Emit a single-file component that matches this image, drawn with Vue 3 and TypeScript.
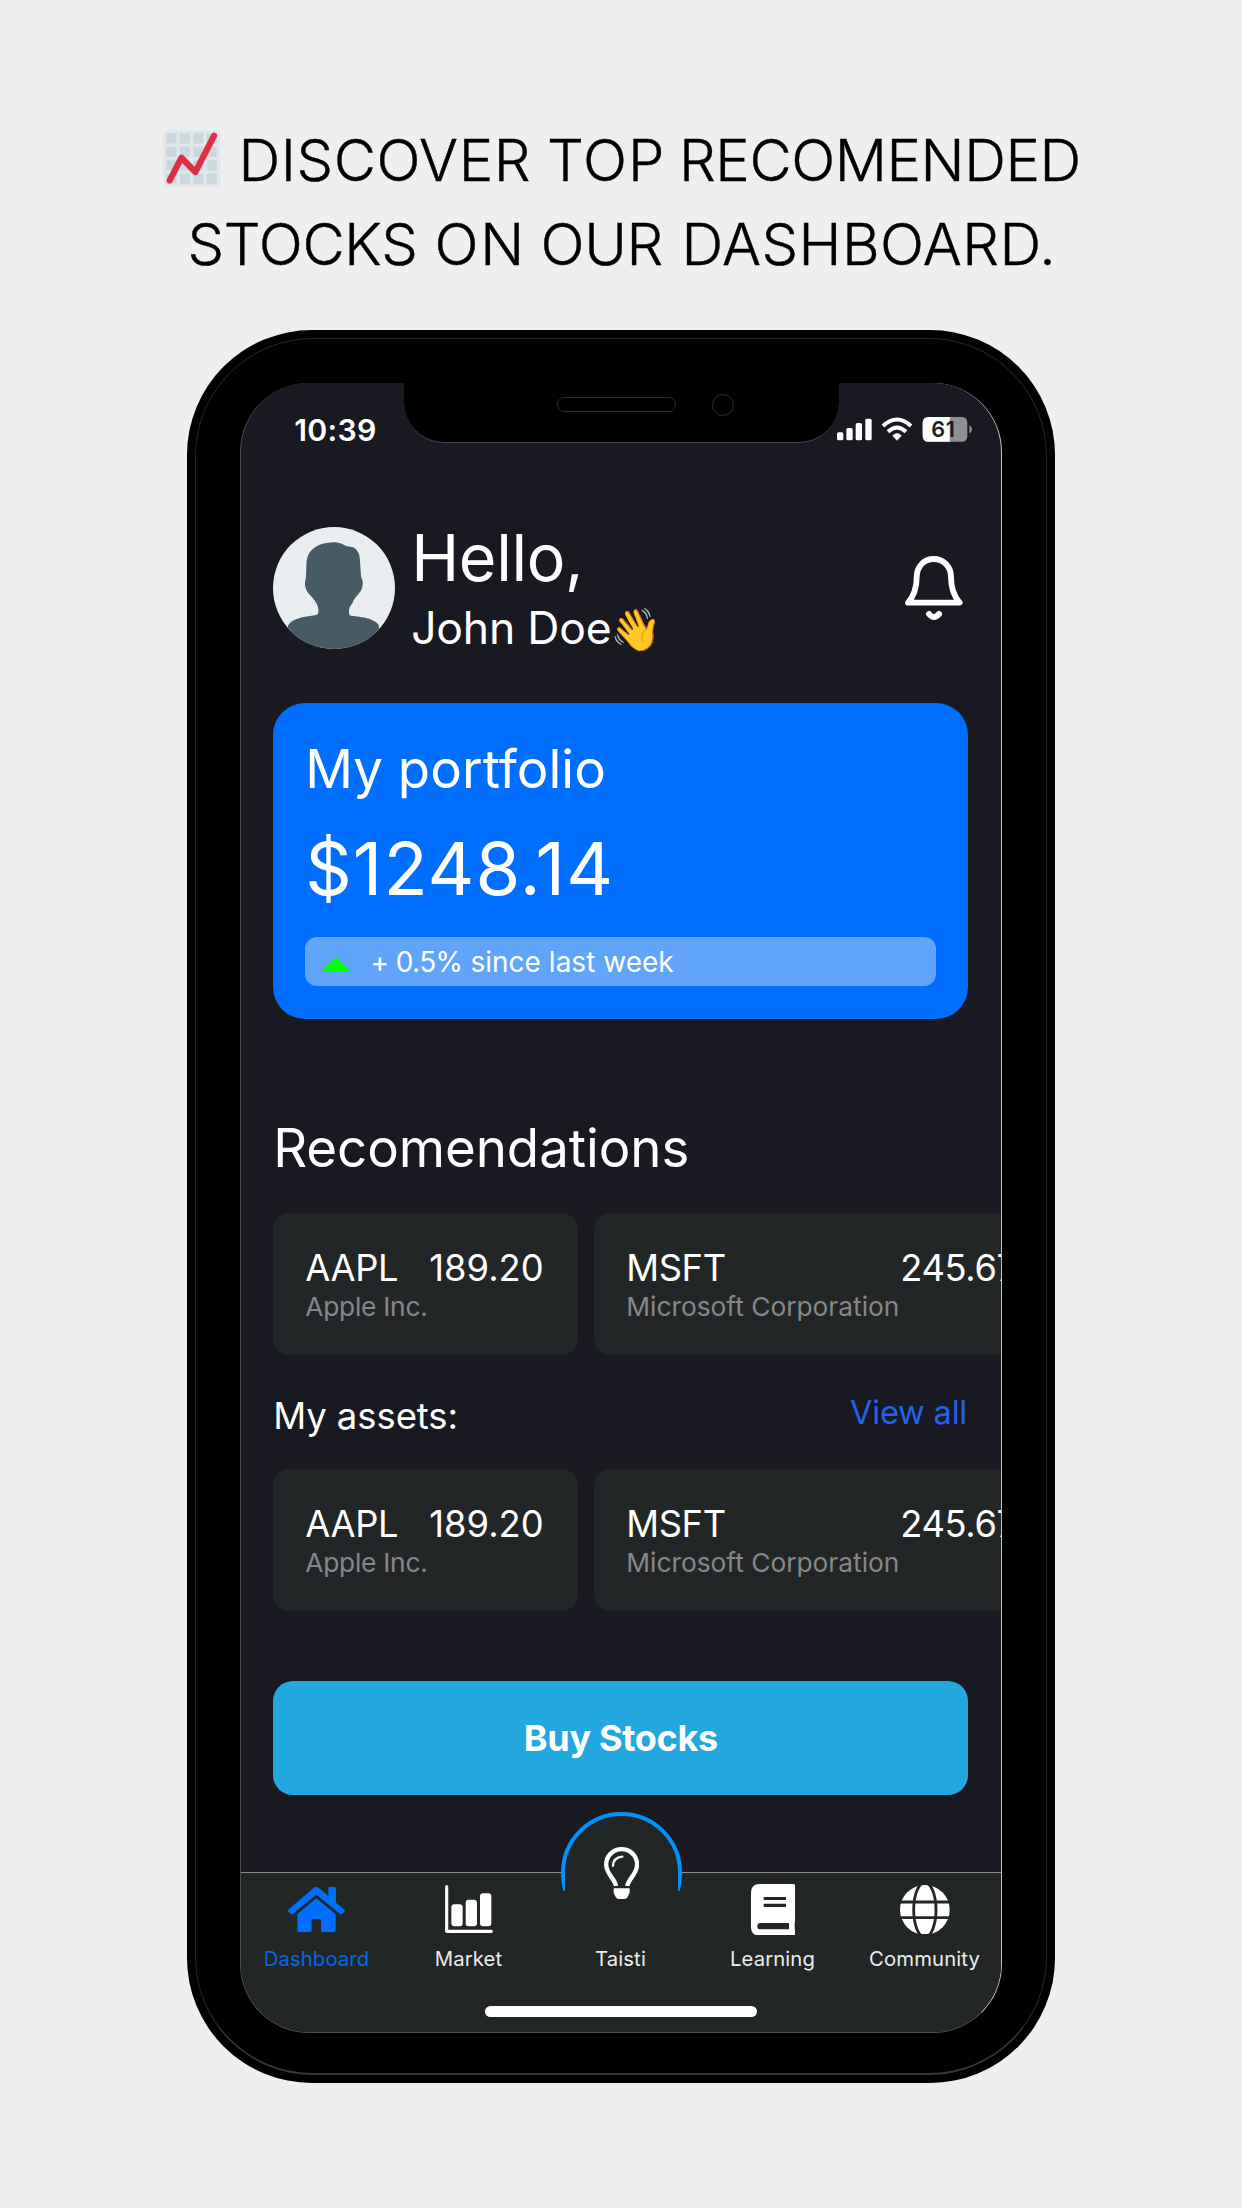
<script setup lang="ts">
interface Stock {
  ticker: string
  name: string
  price: string
  nameWidth: number
}

interface Tab {
  id: 'home' | 'market' | 'taisti' | 'learning' | 'community'
  label: string
}

const stocks: Stock[] = [
  { ticker: 'AAPL', name: 'Apple Inc.', price: '189.20', nameWidth: 124 },
  { ticker: 'MSFT', name: 'Microsoft Corporation', price: '245.67', nameWidth: 274 },
]

const tabs: Tab[] = [
  { id: 'home', label: 'Dashboard' },
  { id: 'market', label: 'Market' },
  { id: 'taisti', label: 'Taisti' },
  { id: 'learning', label: 'Learning' },
  { id: 'community', label: 'Community' },
]

const gridSteps = [2.1, 10.5, 19, 27.4]
</script>

<template>
  <main class="page">
    <h1 class="headline">
      <span class="line line-one">
        <svg class="chart-emoji" viewBox="0 0 36 36">
          <rect width="36" height="36" rx="4" fill="#e1e8ed" />
          <template v-for="y in gridSteps" :key="y">
            <rect v-for="x in gridSteps" :key="x" :x="x" :y="y" width="6.4" height="6.4" fill="#ccd6dd" />
          </template>
          <path d="M4.2 31.6 11.6 17.4 20.3 26.4 32 3.6" fill="none" stroke="#dd2e44" stroke-width="3.9" stroke-linecap="round" stroke-linejoin="round" />
        </svg>
        <span class="w-discover">DISCOVER</span>
        <span class="w-top">TOP</span>
        <span class="w-recomended">RECOMENDED</span>
      </span>
      <span class="line line-two">
        <span class="w-stocks">STOCKS</span>
        <span class="w-on">ON</span>
        <span class="w-our">OUR</span>
        <span class="w-dashboard">DASHBOARD.</span>
      </span>
    </h1>

    <section class="phone">
      <div class="screen">
        <div class="notch">
          <i class="speaker"></i>
          <i class="camera"></i>
        </div>

        <div class="status">
          <span class="time">10:39</span>
          <svg class="status-icons" viewBox="0 0 405 74">
            <g fill="#fff">
              <rect x="0" y="46" width="19" height="24" rx="5" />
              <rect x="28" y="33" width="19" height="37" rx="5" />
              <rect x="56" y="18" width="19" height="52" rx="5" />
              <rect x="85" y="5" width="19" height="65" rx="5" />
              <path d="M180 70 167 56Q180 43 193 56Z" stroke="#fff" stroke-width="2" stroke-linejoin="round" />
            </g>
            <g fill="none" stroke="#fff" stroke-width="12">
              <path d="M138 27Q180-12 222 27" />
              <path d="M153 44Q180 19 207 44" />
            </g>
            <path d="M275 0H375Q391 0 391 18V56Q391 74 375 74H275Q257 74 257 56V18Q257 0 275 0Z" fill="#8e8e93" />
            <path d="M338 0H275Q257 0 257 18V56Q257 74 275 74H338Z" fill="#fff" />
            <path d="M397 25Q405 29 405 37T397 49Z" fill="#8e8e93" />
            <text x="283" y="61" class="battery">61</text>
          </svg>
        </div>

        <header class="hello">
          <svg class="avatar" viewBox="0 0 366 366">
            <clipPath id="avatar-clip"><circle cx="183" cy="183" r="183" /></clipPath>
            <g clip-path="url(#avatar-clip)">
              <rect width="366" height="366" fill="#eaeef1" />
              <path
                d="M182 46C200 46 211 53 221 58C230 60 240 59 248 66C258 76 261 88 261 104L264 147C265 155 271 160 269 170C268 183 266 190 258 199C248 212 242 217 238 229C232 238 227 244 228 254C228 260 229 265 234 266C256 269 279 270 295 278C308 283 320 290 318 304V366H44V304C44 289 57 281 73 275C92 268 112 268 129 264C136 262 137 257 136 246C135 234 128 226 120 214C112 204 102 198 98 184C95 172 95 165 98 155C100 145 99 133 100 121C100 105 101 90 109 78C124 56 152 46 182 46Z"
                fill="#475b65"
              />
            </g>
          </svg>
          <div class="greeting">
            <div class="greet">Hello,</div>
            <div class="user">John Doe<span class="wave">👋</span></div>
          </div>
          <svg class="bell" viewBox="0 0 173 192" fill="none" stroke="#fff" stroke-linecap="round" stroke-linejoin="round">
            <path d="M9 140C29 118 35 96 35 64C35 30 58 9 86 9C114 9 138 30 138 64C138 96 144 118 164 140Z" stroke-width="17.5" />
            <path d="M72 174Q86 192 102 174" stroke-width="18" />
          </svg>
        </header>

        <section class="portfolio">
          <div class="portfolio-title">My portfolio</div>
          <div class="amount">$1248.14</div>
          <div class="change">
            <svg class="up" viewBox="0 0 84 47"><path d="M3 43 42 4 81 43Z" fill="#0f0" stroke="#0f0" stroke-width="6" stroke-linejoin="round" /></svg>
            <span><span class="percent">+ 0.5%</span> since last week</span>
          </div>
        </section>

        <h2 class="section-title">Recomendations</h2>
        <div class="stocks">
          <article v-for="s in stocks" :key="s.ticker" class="stock">
            <div class="stock-id" :style="{ width: s.nameWidth + 'px' }">
              <div class="ticker">{{ s.ticker }}</div>
              <div class="company">{{ s.name }}</div>
            </div>
            <div class="ticker">{{ s.price }}</div>
          </article>
        </div>

        <div class="assets-head">
          <span class="assets-title">My assets:</span>
          <a class="view-all">View all</a>
        </div>
        <div class="stocks">
          <article v-for="s in stocks" :key="s.ticker" class="stock">
            <div class="stock-id" :style="{ width: s.nameWidth + 'px' }">
              <div class="ticker">{{ s.ticker }}</div>
              <div class="company">{{ s.name }}</div>
            </div>
            <div class="ticker">{{ s.price }}</div>
          </article>
        </div>

        <button class="buy">Buy Stocks</button>

        <nav class="tabs">
          <div v-for="t in tabs" :key="t.id" class="tab" :class="{ active: t.id === 'home' }">
            <div class="tab-icon">
              <svg v-if="t.id === 'home'" width="57" height="45.3" viewBox="0 0 171 136" fill="#006eff">
                <path d="M76 4Q85-4 94 4L121 27V4Q121 0 125 0H140Q144 0 144 4V47L168 67Q173 71 169 75L163 80Q159 84 155 80L85 23 15 80Q11 84 7 80L2 75Q-2 71 2 67Z" />
                <path d="M85 34 143 81V130Q143 135 138 135H104Q99 135 99 130V101Q99 96 94 96H76Q71 96 71 101V130Q71 135 66 135H33Q28 135 28 130V81Z" />
              </svg>
              <svg v-else-if="t.id === 'market'" width="48" height="48.3" viewBox="0 0 144 145" fill="#fff">
                <path d="M5 5V139H139" fill="none" stroke="#fff" stroke-width="9.5" stroke-linecap="round" stroke-linejoin="round" />
                <rect x="19" y="58" width="34" height="66" rx="9" />
                <rect x="62" y="44" width="34" height="80" rx="9" />
                <rect x="105" y="25" width="34" height="99" rx="9" />
              </svg>
              <svg v-else-if="t.id === 'learning'" width="44.7" height="51.7" viewBox="0 0 134 155">
                <path
                  fill="#fff"
                  fill-rule="evenodd"
                  d="M26 0H126Q134 0 134 8V108Q134 113 131 115V136Q134 140 134 147Q134 155 126 155H26Q0 155 0 129V26Q0 0 26 0ZM38 39V48H105V39ZM38 59V69H105V59ZM29 117Q19 117 19 126.5T29 136H114V117Z"
                />
              </svg>
              <svg v-else-if="t.id === 'community'" width="49.7" height="49.7" viewBox="0 0 149 149">
                <circle cx="74.5" cy="74.5" r="74.5" fill="#fff" />
                <g fill="none" stroke="#232627" stroke-width="8.5">
                  <ellipse cx="74.5" cy="74.5" rx="33.5" ry="82" />
                  <path d="M0 51H149M0 98H149" />
                </g>
              </svg>
              <div v-else class="fab">
                <svg width="35.3" height="52" viewBox="0 0 106 156" fill="none" stroke="#fff">
                  <path d="M36 117C33 95 6.5 82 6.5 52A46.5 45.5 0 0 1 99.5 52C99.5 82 73 95 70 117" stroke-width="13" />
                  <path d="M27 56Q28 32 55 29" stroke-width="7" stroke-linecap="round" />
                  <path d="M29 124H77V136Q71 156 63 156H43Q35 156 29 136Z" fill="#fff" stroke="none" />
                </svg>
              </div>
            </div>
            <span class="tab-label">{{ t.label }}</span>
          </div>
          <i class="indicator"></i>
        </nav>
      </div>
    </section>
  </main>
</template>

<style>
body {
  margin: 0;
  background: #efefef;
}
</style>

<style scoped>
.page {
  box-sizing: border-box;
  width: 1242px;
  height: 2208px;
  padding-top: 117.6px;
  background: #efefef;
  overflow: hidden;
  font-family: Inter, 'Liberation Sans', sans-serif;
  color: #fff;
}
svg {
  display: block;
  flex: none;
}
.headline {
  margin: 0;
  height: 212.9px;
  font-size: 58px;
  line-height: 84px;
  font-weight: 300;
  color: #000;
  -webkit-text-stroke: 0.4px #000;
}
.line {
  display: grid;
  height: 84px;
  white-space: nowrap;
}
.line-one {
  padding-left: 163.3px;
  grid-template-columns: 75.2px 308.5px 132px auto;
}
.line-two {
  padding-left: 187.5px;
  grid-template-columns: 247px 106px 141px auto;
}
.w-discover {
  letter-spacing: 0.55px;
}
.w-top {
  letter-spacing: 0.9px;
}
.w-recomended {
  letter-spacing: -0.45px;
}
.w-stocks {
  letter-spacing: -0.3px;
}
.w-on {
  letter-spacing: 1.8px;
}
.w-our {
  letter-spacing: -0.34px;
}
.w-dashboard {
  letter-spacing: 0.45px;
}
.chart-emoji {
  width: 57.4px;
  height: 57.4px;
  margin-top: 12.4px;
}
.phone {
  position: relative;
  box-sizing: border-box;
  width: 867.4px;
  height: 1753px;
  margin-left: 187.3px;
  padding: 52.6px 0 0 52.7px;
  border-radius: 125px;
  background: #000;
}
.phone::before {
  content: '';
  position: absolute;
  inset: 8px;
  border: 1px solid #242424;
  border-bottom: 2px solid #383838;
  border-radius: 118px;
}
.screen {
  position: relative;
  box-sizing: border-box;
  width: 762px;
  height: 1650px;
  padding: 0 32.5px 0 32.2px;
  display: flex;
  flex-direction: column;
  overflow: hidden;
  border: 1px solid #505052;
  border-top: 0;
  border-right-color: #c4c4c8;
  border-radius: 69px;
  background: #191921;
}
.notch {
  position: absolute;
  top: 0;
  left: 163px;
  box-sizing: border-box;
  width: 435px;
  height: 60px;
  padding: 14px 105px 0 153px;
  display: flex;
  justify-content: space-between;
  border-bottom: 1px solid #47474b;
  border-radius: 0 0 40px 40px;
  background: #000;
}
.speaker {
  box-sizing: border-box;
  width: 119px;
  height: 15px;
  border: 1px solid #2c2c2c;
  border-radius: 7px;
}
.camera {
  box-sizing: border-box;
  width: 22px;
  height: 22px;
  margin-top: -3.5px;
  border: 1px solid #2c2c2c;
  border-radius: 50%;
}
.status {
  flex: none;
  box-sizing: border-box;
  height: 143.5px;
  padding: 29px 0 0 21px;
  display: flex;
  justify-content: space-between;
  align-items: flex-start;
}
.time {
  font-size: 30.2px;
  line-height: 36px;
  font-weight: 600;
  letter-spacing: 0.35px;
}
.status-icons {
  width: 135px;
  height: 24.7px;
  margin: 5.4px -3.3px 0 0;
}
.battery {
  font-size: 65px;
  font-weight: 600;
  letter-spacing: 2px;
  fill: #1a1a22;
}
.hello {
  flex: none;
  display: flex;
  align-items: flex-start;
  height: 122px;
}
.avatar {
  width: 122px;
  height: 122px;
}
.greeting {
  flex: 1;
  margin: 1px 0 0 16px;
  white-space: nowrap;
}
.greet {
  font-size: 64.6px;
  line-height: 60px;
  letter-spacing: -0.35px;
}
.user {
  height: 54px;
  margin-top: 13.2px;
  font-size: 44.5px;
  line-height: 54px;
  letter-spacing: -0.22px;
}
.wave {
  margin-left: -1px;
  font-family: 'Noto Color Emoji', sans-serif;
  font-size: 41.5px;
  line-height: 1;
}
.bell {
  width: 57.7px;
  height: 64px;
  margin: 29.7px 5.4px 0 0;
}
.portfolio {
  flex: none;
  box-sizing: border-box;
  height: 315.8px;
  margin-top: 54.4px;
  padding: 33.6px 32px 0;
  border-radius: 32px;
  background: #006eff;
}
.portfolio-title {
  font-size: 52.8px;
  line-height: 64px;
  letter-spacing: 0.06px;
}
.amount {
  margin-top: 18.4px;
  font-size: 72.5px;
  line-height: 100px;
  letter-spacing: 1.1px;
}
.change {
  display: flex;
  align-items: center;
  height: 48.7px;
  margin-top: 18.3px;
  padding-left: 16.4px;
  border-radius: 12px;
  background: #61a5fb;
  font-size: 28px;
  letter-spacing: 0.02px;
}
.change > span {
  padding-top: 1px;
}
.percent {
  letter-spacing: -0.6px;
}
.up {
  width: 28px;
  height: 15.7px;
  margin: 6px 21px 0 0;
}
.section-title {
  margin: 97.2px 0 32.8px;
  font-size: 52.8px;
  line-height: 64px;
  font-weight: 400;
  letter-spacing: -0.05px;
}
.stocks {
  flex: none;
  display: flex;
  gap: 16.3px;
  height: 142.3px;
}
.stock {
  flex: none;
  display: flex;
  box-sizing: border-box;
  min-width: 304.7px;
  padding: 33px 30px 0 32.2px;
  border-radius: 16px;
  background: #232627;
  white-space: nowrap;
}
.stock:first-child {
  width: 304.7px;
}
.ticker {
  font-size: 36.3px;
  line-height: 44px;
}
.stock-id .ticker {
  letter-spacing: -0.4px;
}
.company {
  font-size: 26.3px;
  line-height: 33px;
  color: #868788;
}
.stock:first-child .company {
  letter-spacing: -0.25px;
}
.stock:last-child > .ticker {
  letter-spacing: -0.4px;
}
.assets-head {
  display: flex;
  justify-content: space-between;
  margin: 39.4px 0 30.3px;
  line-height: 44px;
}
.assets-title {
  font-size: 36.5px;
  letter-spacing: -0.08px;
}
.view-all {
  margin: -3.5px 1.4px 0 0;
  font-size: 32.5px;
  letter-spacing: -0.15px;
  color: #2263eb;
}
.buy {
  flex: none;
  height: 114px;
  margin: 69.8px 0 0;
  padding: 1px 0 0;
  border: 0;
  border-radius: 20px;
  background: #22a7df;
  color: #fff;
  font: 700 36px Inter, 'Liberation Sans', sans-serif;
  letter-spacing: -0.3px;
}
.tabs {
  position: relative;
  box-sizing: border-box;
  display: flex;
  height: 160px;
  margin: auto -32.5px 0 -32.2px;
  border-top: 1px solid #8c8c8e;
  background: #232627;
}
.tab {
  position: relative;
  flex: 1;
  display: flex;
  flex-direction: column;
  align-items: center;
}
.tab-icon {
  display: flex;
  align-items: center;
  justify-content: center;
  height: 73px;
}
.tab-label {
  margin: 0.4px 1px 0 0;
  font-size: 20.3px;
  line-height: 26px;
  letter-spacing: 0.12px;
  color: #ececec;
}
.active .tab-label {
  color: #0469e6;
}
.fab {
  position: absolute;
  top: -61px;
  left: 15.6px;
  box-sizing: border-box;
  width: 121.5px;
  height: 121.5px;
  display: flex;
  justify-content: center;
  align-items: flex-start;
  padding-top: 35.4px;
}
.fab::before {
  content: '';
  position: absolute;
  inset: 0;
  box-sizing: border-box;
  border: 4px solid #0093fe;
  border-radius: 50%;
  background: #232627;
  clip-path: inset(0 0 42.5px 0);
}
.fab::after {
  content: '';
  position: absolute;
  top: 61px;
  left: 4px;
  right: 4px;
  height: 20px;
  background: #232627;
}
.fab svg {
  position: relative;
  z-index: 1;
}
.indicator {
  position: absolute;
  left: 244px;
  bottom: 15px;
  width: 272px;
  height: 11px;
  border-radius: 6px;
  background: #fff;
}
</style>
